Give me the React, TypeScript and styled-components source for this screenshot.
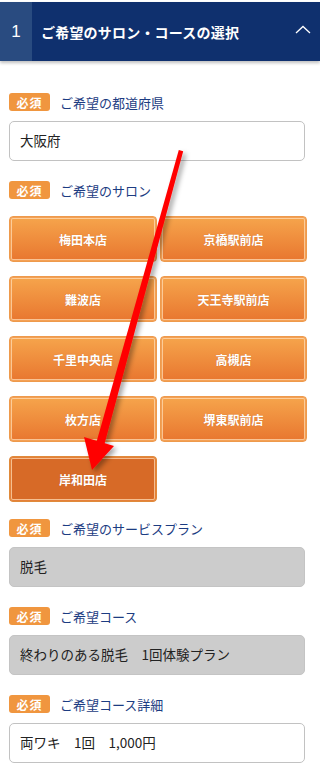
import React from "react";
import styled, { createGlobalStyle } from "styled-components";

const Global = createGlobalStyle`
  html, body { margin: 0; padding: 0; background: #fff; }
  body { width: 320px; font-family: "Noto Sans CJK JP", "Noto Sans", sans-serif; }
`;

const Page = styled.div`
  position: relative;
  width: 320px;
  padding-top: 2px;
  padding-bottom: 20px;
`;

const Header = styled.div`
  display: flex;
  align-items: center;
  height: 59px;
  background: #0f306e;
  box-shadow: 0 2px 3px rgba(0, 0, 0, 0.25);
  color: #fff;
`;

const StepNum = styled.div`
  width: 32px;
  height: 100%;
  background: #294b80;
  display: flex;
  align-items: center;
  justify-content: center;
  font-family: "Liberation Sans", Arial, sans-serif;
  font-size: 17px;
`;

const HeaderTitle = styled.div`
  flex: 1;
  padding-left: 9px;
  font-size: 14px;
  font-weight: bold;
  letter-spacing: 0.2px;
`;

const Chevron = styled.svg`
  width: 16px;
  height: 9px;
  margin-right: 9px;
  margin-top: -4px;
`;

const Body = styled.div`
  padding: 32px 0 0 9px;
  display: flex;
  flex-direction: column;
`;

const Field = styled.div<{ $gapAfter?: number }>`
  display: flex;
  flex-direction: column;
  margin-bottom: ${(p) => p.$gapAfter ?? 20}px;
`;

const LabelRow = styled.div<{ $gap?: number }>`
  display: flex;
  align-items: center;
  height: 18px;
  margin-bottom: ${(p) => p.$gap ?? 10}px;
`;

const Badge = styled.span`
  width: 41px;
  height: 18px;
  border-radius: 3px;
  background: #f0963f;
  color: #fff;
  font-size: 12px;
  font-weight: bold;
  display: flex;
  align-items: center;
  justify-content: center;
  letter-spacing: 1px;
`;

const LabelText = styled.span`
  margin-left: 10px;
  font-size: 13px;
  color: #1c3c82;
`;

const Input = styled.div<{ $disabled?: boolean }>`
  box-sizing: border-box;
  width: 296px;
  height: 40px;
  border: 1px solid ${(p) => (p.$disabled ? "#c4c4c4" : "#c2c2c2")};
  border-radius: 5px;
  background: ${(p) => (p.$disabled ? "#cccccc" : "#fff")};
  display: flex;
  align-items: center;
  padding-left: 10px;
  padding-bottom: 2px;
  font-size: 13.5px;
  color: #222;
  white-space: pre;
`;

const Grid = styled.div`
  display: grid;
  grid-template-columns: 148px 147px;
  column-gap: 3px;
  row-gap: 14px;
`;

const SalonButton = styled.div<{ $active?: boolean }>`
  box-sizing: border-box;
  height: 46px;
  border-radius: 4px;
  border: 1px solid ${(p) => (p.$active ? "#e08a3a" : "#ee9a4c")};
  background: ${(p) =>
    p.$active ? "#d76a27" : "linear-gradient(#f6a54c, #e8762f)"};
  box-shadow: inset 0 0 0 1px ${(p) => (p.$active ? "#e4803a" : "#f3a055")},
    inset 0 0 0 2px rgba(255, 220, 180, 0.75);
  display: flex;
  align-items: center;
  justify-content: center;
  color: #fff;
  font-size: 12px;
  font-weight: bold;
  text-shadow: 0 0 1px rgba(150, 60, 0, 0.4);
`;

const Overlay = styled.svg`
  position: absolute;
  left: 0;
  top: 0;
  width: 320px;
  height: 770px;
  pointer-events: none;
`;

const salons = [
  "梅田本店",
  "京橋駅前店",
  "難波店",
  "天王寺駅前店",
  "千里中央店",
  "高槻店",
  "枚方店",
  "堺東駅前店",
  "岸和田店",
];

export default function App() {
  return (
    <Page>
      <Global />
      <Header>
        <StepNum>1</StepNum>
        <HeaderTitle>ご希望のサロン・コースの選択</HeaderTitle>
        <Chevron viewBox="0 0 16 9">
          <polyline points="1,8 8,1.5 15,8" fill="none" stroke="#fff" strokeWidth="1.3" />
        </Chevron>
      </Header>
      <Body>
        <Field>
          <LabelRow>
            <Badge>必須</Badge>
            <LabelText>ご希望の都道府県</LabelText>
          </LabelRow>
          <Input>大阪府</Input>
        </Field>
        <Field $gapAfter={17}>
          <LabelRow $gap={17}>
            <Badge>必須</Badge>
            <LabelText>ご希望のサロン</LabelText>
          </LabelRow>
          <Grid>
            {salons.map((s) => (
              <SalonButton key={s} $active={s === "岸和田店"}>
                {s}
              </SalonButton>
            ))}
          </Grid>
        </Field>
        <Field>
          <LabelRow>
            <Badge>必須</Badge>
            <LabelText>ご希望のサービスプラン</LabelText>
          </LabelRow>
          <Input $disabled>脱毛</Input>
        </Field>
        <Field>
          <LabelRow>
            <Badge>必須</Badge>
            <LabelText>ご希望コース</LabelText>
          </LabelRow>
          <Input $disabled>終わりのある脱毛　1回体験プラン</Input>
        </Field>
        <Field $gapAfter={0}>
          <LabelRow>
            <Badge>必須</Badge>
            <LabelText>ご希望コース詳細</LabelText>
          </LabelRow>
          <Input>両ワキ　1回　1,000円</Input>
        </Field>
      </Body>
      <Overlay viewBox="0 0 320 770">
        <defs>
          <filter id="sh" x="-50%" y="-10%" width="200%" height="120%">
            <feDropShadow dx="3" dy="3" stdDeviation="2.5" floodColor="#000" floodOpacity="0.35" />
          </filter>
        </defs>
        <g filter="url(#sh)" fill="#ff0000">
          <polygon points="178.8,150 183.2,151.3 104.5,444 96.5,442" />
          <polygon points="92,470 84,437 114,446" />
        </g>
      </Overlay>
    </Page>
  );
}
